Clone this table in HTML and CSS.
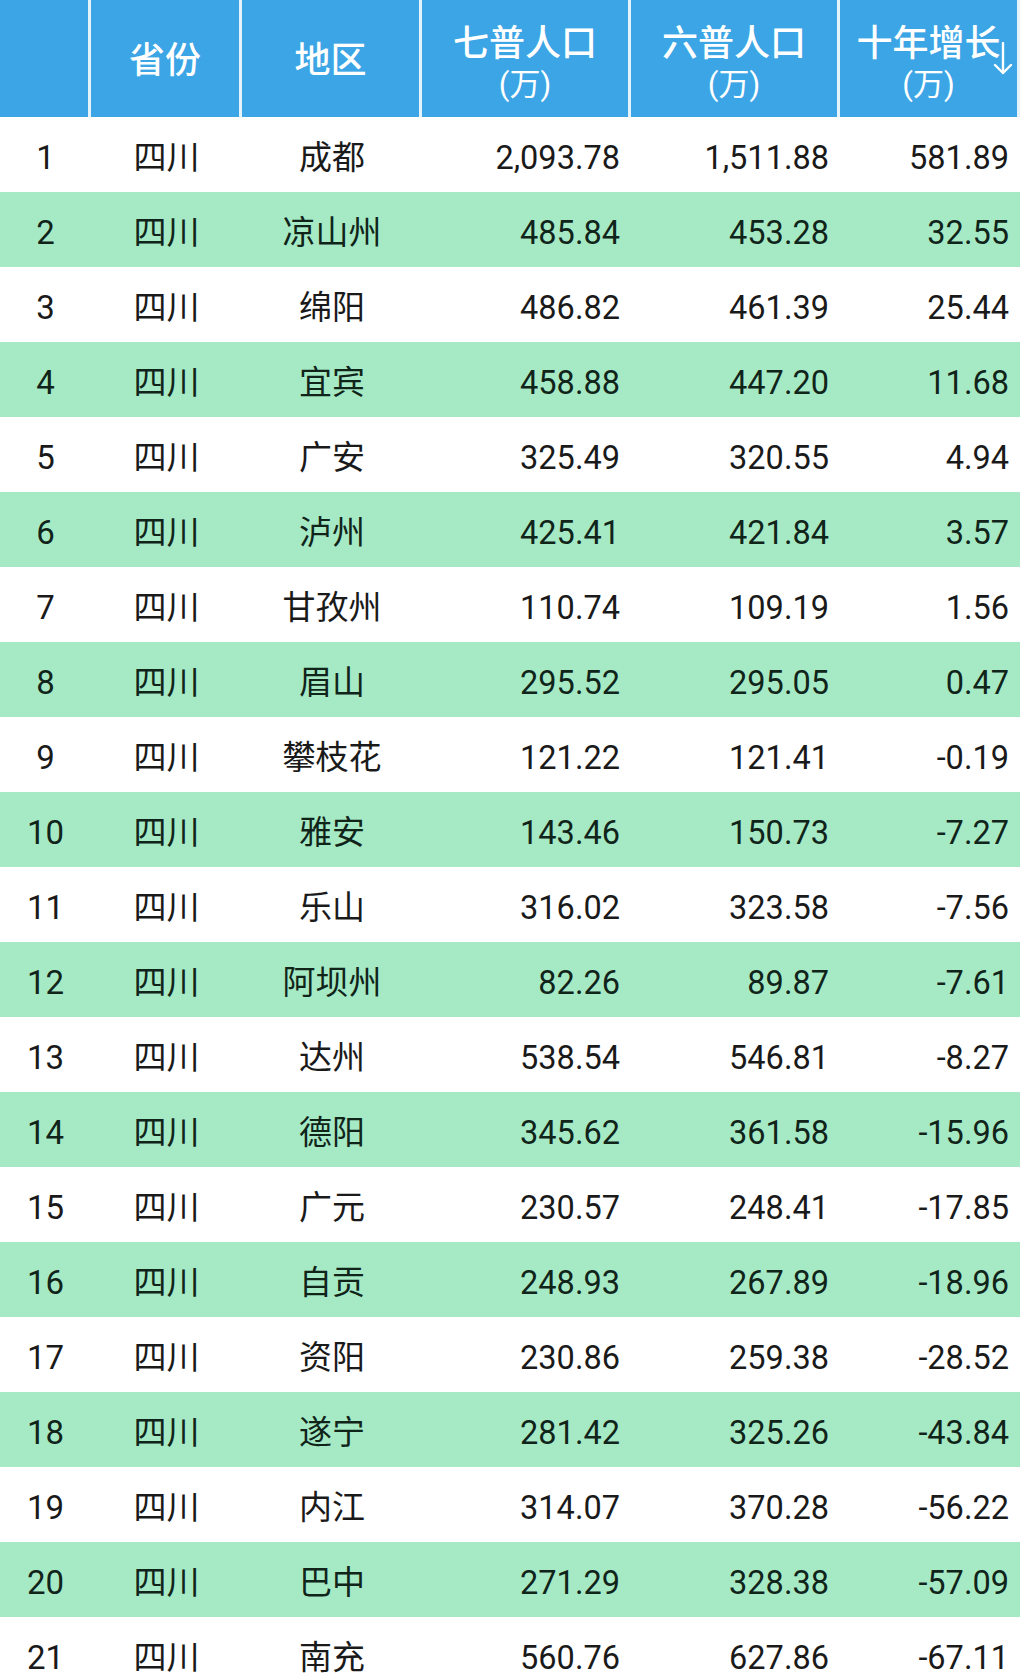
FILE: index.html
```html
<!DOCTYPE html>
<html lang="zh-CN">
<head>
<meta charset="utf-8">
<title>四川人口</title>
<link rel="stylesheet" href="styles.css">
</head>
<body>
<div class="table">
  <div class="head">
    <div class="hc"></div>
    <div class="hc"><span class="h1">省份</span></div>
    <div class="hc"><span class="h1">地区</span></div>
    <div class="hc two"><span class="h1">七普人口</span><span class="h2">(万)</span></div>
    <div class="hc two"><span class="h1">六普人口</span><span class="h2">(万)</span></div>
    <div class="hc two sort"><span class="h1">十年增长</span><span class="h2">(万)</span>
      <svg class="arrow" width="20" height="34" viewBox="0 0 20 34"><path d="M10 1 V31 M2 23 L10 31 L18 23" fill="none" stroke="#fff" stroke-width="2.4" stroke-linecap="round" stroke-linejoin="round"/></svg>
    </div>
  </div>
  <div class="row"><span class="c">1</span><span class="c">四川</span><span class="c">成都</span><span class="n">2,093.78</span><span class="n">1,511.88</span><span class="n">581.89</span></div>
  <div class="row g"><span class="c">2</span><span class="c">四川</span><span class="c">凉山州</span><span class="n">485.84</span><span class="n">453.28</span><span class="n">32.55</span></div>
  <div class="row"><span class="c">3</span><span class="c">四川</span><span class="c">绵阳</span><span class="n">486.82</span><span class="n">461.39</span><span class="n">25.44</span></div>
  <div class="row g"><span class="c">4</span><span class="c">四川</span><span class="c">宜宾</span><span class="n">458.88</span><span class="n">447.20</span><span class="n">11.68</span></div>
  <div class="row"><span class="c">5</span><span class="c">四川</span><span class="c">广安</span><span class="n">325.49</span><span class="n">320.55</span><span class="n">4.94</span></div>
  <div class="row g"><span class="c">6</span><span class="c">四川</span><span class="c">泸州</span><span class="n">425.41</span><span class="n">421.84</span><span class="n">3.57</span></div>
  <div class="row"><span class="c">7</span><span class="c">四川</span><span class="c">甘孜州</span><span class="n">110.74</span><span class="n">109.19</span><span class="n">1.56</span></div>
  <div class="row g"><span class="c">8</span><span class="c">四川</span><span class="c">眉山</span><span class="n">295.52</span><span class="n">295.05</span><span class="n">0.47</span></div>
  <div class="row"><span class="c">9</span><span class="c">四川</span><span class="c">攀枝花</span><span class="n">121.22</span><span class="n">121.41</span><span class="n">-0.19</span></div>
  <div class="row g"><span class="c">10</span><span class="c">四川</span><span class="c">雅安</span><span class="n">143.46</span><span class="n">150.73</span><span class="n">-7.27</span></div>
  <div class="row"><span class="c">11</span><span class="c">四川</span><span class="c">乐山</span><span class="n">316.02</span><span class="n">323.58</span><span class="n">-7.56</span></div>
  <div class="row g"><span class="c">12</span><span class="c">四川</span><span class="c">阿坝州</span><span class="n">82.26</span><span class="n">89.87</span><span class="n">-7.61</span></div>
  <div class="row"><span class="c">13</span><span class="c">四川</span><span class="c">达州</span><span class="n">538.54</span><span class="n">546.81</span><span class="n">-8.27</span></div>
  <div class="row g"><span class="c">14</span><span class="c">四川</span><span class="c">德阳</span><span class="n">345.62</span><span class="n">361.58</span><span class="n">-15.96</span></div>
  <div class="row"><span class="c">15</span><span class="c">四川</span><span class="c">广元</span><span class="n">230.57</span><span class="n">248.41</span><span class="n">-17.85</span></div>
  <div class="row g"><span class="c">16</span><span class="c">四川</span><span class="c">自贡</span><span class="n">248.93</span><span class="n">267.89</span><span class="n">-18.96</span></div>
  <div class="row"><span class="c">17</span><span class="c">四川</span><span class="c">资阳</span><span class="n">230.86</span><span class="n">259.38</span><span class="n">-28.52</span></div>
  <div class="row g"><span class="c">18</span><span class="c">四川</span><span class="c">遂宁</span><span class="n">281.42</span><span class="n">325.26</span><span class="n">-43.84</span></div>
  <div class="row"><span class="c">19</span><span class="c">四川</span><span class="c">内江</span><span class="n">314.07</span><span class="n">370.28</span><span class="n">-56.22</span></div>
  <div class="row g"><span class="c">20</span><span class="c">四川</span><span class="c">巴中</span><span class="n">271.29</span><span class="n">328.38</span><span class="n">-57.09</span></div>
  <div class="row"><span class="c">21</span><span class="c">四川</span><span class="c">南充</span><span class="n">560.76</span><span class="n">627.86</span><span class="n">-67.11</span></div>
</div>
</body>
</html>
```

FILE: styles.css
```css
html, body {
  margin: 0;
  padding: 0;
  overflow: hidden;
  background: #ffffff;
}
body {
  width: 1020px;
  height: 1676px;
  font-family: Roboto, "Noto Sans CJK SC", sans-serif;
  color: #1a1a1a;
}
.table {
  width: 1020px;
}
.head {
  display: grid;
  grid-template-columns: 91px 151px 180px 209px 209px 180px;
  height: 117px;
  background: #3ba5e5;
}
.hc {
  position: relative;
  box-sizing: border-box;
  border-right: 3px solid #e6f3fb;
  display: flex;
  flex-direction: column;
  align-items: center;
  justify-content: center;
  padding-top: 4px;
  color: #ffffff;
}
.hc.two {
  justify-content: flex-start;
  padding-top: 21px;
}
.h1 {
  font-size: 36px;
  line-height: 46px;
  font-weight: 500;
}
.h2 {
  font-size: 31px;
  line-height: 36px;
  font-weight: 400;
}
.arrow {
  position: absolute;
  right: 4px;
  top: 42px;
}
.row {
  display: grid;
  grid-template-columns: 91px 151px 180px 209px 209px 180px;
  height: 75px;
  align-items: center;
  padding-top: 7px;
  box-sizing: border-box;
  background: #ffffff;
}
.row.g {
  background: #a6eac5;
  color: #10241a;
}
.c {
  text-align: center;
  font-size: 33px;
  line-height: 40px;
}
.n {
  text-align: right;
  padding-right: 11px;
  font-size: 32.5px;
  line-height: 40px;
}
```
